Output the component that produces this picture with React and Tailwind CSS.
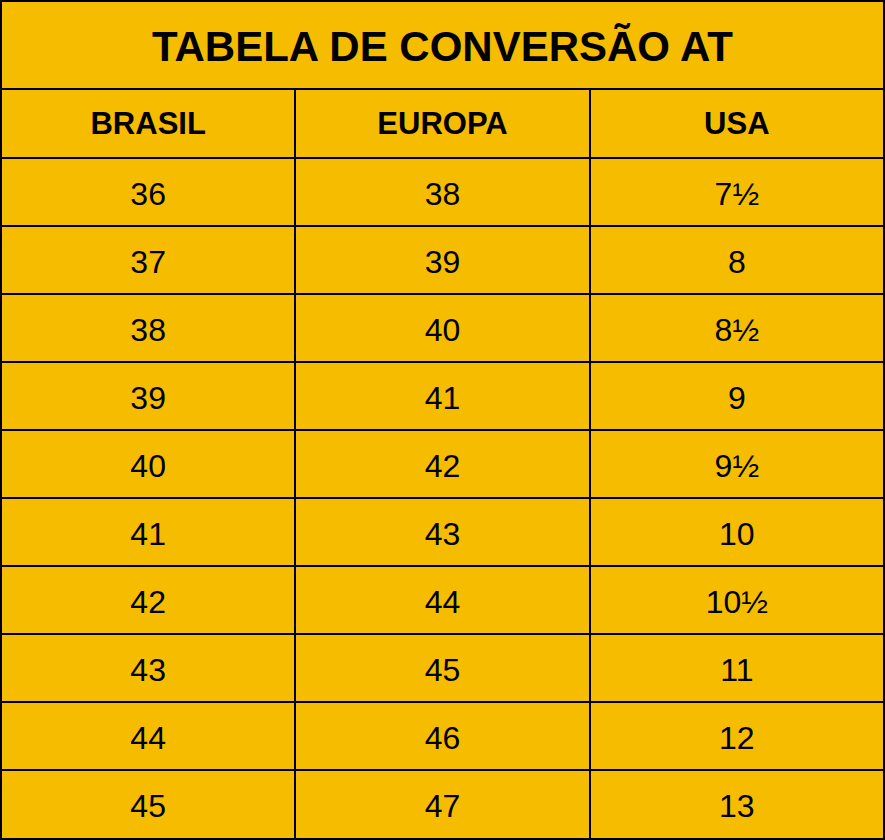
const rows = [
  ['36', '38', '7½'],
  ['37', '39', '8'],
  ['38', '40', '8½'],
  ['39', '41', '9'],
  ['40', '42', '9½'],
  ['41', '43', '10'],
  ['42', '44', '10½'],
  ['43', '45', '11'],
  ['44', '46', '12'],
  ['45', '47', '13'],
];

export default function App() {
  return (
    <div
      className="w-[885px] h-[840px] bg-black p-[2px] flex flex-col gap-[2px] text-black"
      style={{ fontFamily: '"Liberation Sans", Arial, sans-serif' }}
    >
      <div className="h-[86px] bg-[#f6bd00] flex items-center justify-center pt-[3px] text-[42px] font-bold">
        TABELA DE CONVERSÃO AT
      </div>
      <div className="grid grid-cols-3 gap-[2px] h-[67px]">
        {['BRASIL', 'EUROPA', 'USA'].map((h) => (
          <div key={h} className="bg-[#f6bd00] flex items-center justify-center pt-[1px] text-[31px] font-bold">
            {h}
          </div>
        ))}
      </div>
      {rows.map((r, i) => (
        <div key={i} className={`grid grid-cols-3 gap-[2px] ${i === rows.length - 1 ? 'h-[67px]' : 'h-[66px]'}`}>
          {r.map((c, j) => (
            <div key={j} className="bg-[#f6bd00] flex items-center justify-center pt-[3px] text-[32px]">
              {c}
            </div>
          ))}
        </div>
      ))}
    </div>
  );
}
